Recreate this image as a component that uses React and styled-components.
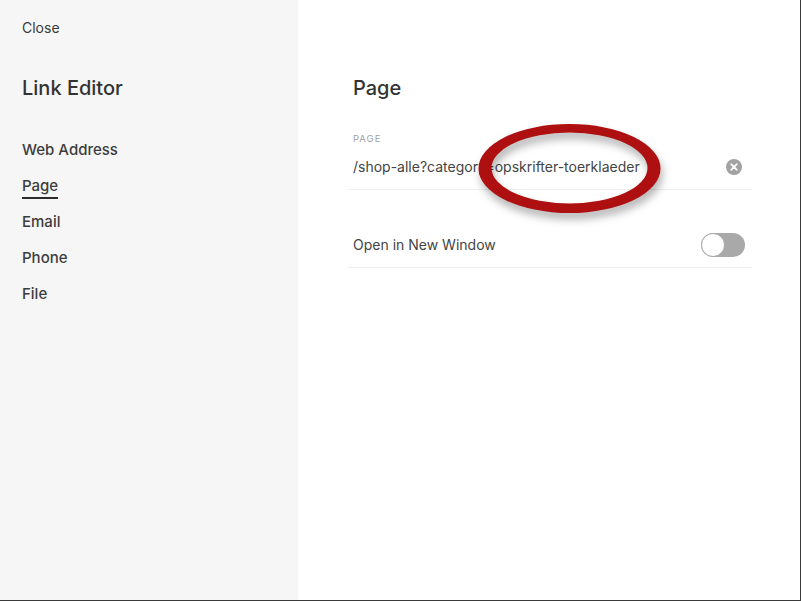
import React from "react";
import styled, { createGlobalStyle } from "styled-components";

const GlobalStyle = createGlobalStyle`
  html, body {
    margin: 0;
    padding: 0;
    background: #fff;
  }
  body {
    font-family: "Inter", "Liberation Sans", sans-serif;
    color: #2f2f2f;
  }
`;

const navItems = ["Web Address", "Page", "Email", "Phone", "File"];

// hand drawn ring, thicker at the sides than at top and bottom
const ringPath =
  "M8.5 49.5a91 44.5 0 1 0 182 0a91 44.5 0 1 0-182 0z" +
  "M21.5 49a78 35.5 0 1 0 156 0a78 35.5 0 1 0-156 0z";

export default function App() {
  return (
    <Frame>
      <GlobalStyle />
      <Sidebar>
        <CloseLink>Close</CloseLink>
        <SideTitle>Link Editor</SideTitle>
        <Nav>
          {navItems.map(item => (
            <NavItem key={item} $active={item === "Page"}>
              {item}
            </NavItem>
          ))}
        </Nav>
      </Sidebar>
      <Main>
        <MainTitle>Page</MainTitle>
        <Field>
          <FieldLabel>PAGE</FieldLabel>
          <FieldRow>
            <FieldValue>/shop-alle?category=opskrifter-toerklaeder</FieldValue>
            <ClearIcon viewBox="0 0 16 16">
              <circle cx="8" cy="8" r="8" fill="#a2a2a2" />
              <path
                d="M5.2 5.2l5.6 5.6M10.8 5.2l-5.6 5.6"
                stroke="#fff"
                strokeWidth="1.7"
                strokeLinecap="round"
              />
            </ClearIcon>
          </FieldRow>
        </Field>
        <ToggleRow>
          <ToggleLabel>Open in New Window</ToggleLabel>
          <Toggle>
            <ToggleKnob />
          </Toggle>
        </ToggleRow>
        <Ring viewBox="0 0 201 109">
          <defs>
            <filter id="ringShadow" x="-10%" y="-20%" width="120%" height="145%">
              <feGaussianBlur stdDeviation="4" />
            </filter>
          </defs>
          <path
            d={ringPath}
            fillRule="evenodd"
            fill="#000"
            fillOpacity="0.3"
            filter="url(#ringShadow)"
            transform="translate(2 6)"
          />
          <path d={ringPath} fillRule="evenodd" fill="#ae0f10" />
        </Ring>
      </Main>
    </Frame>
  );
}

const Frame = styled.div`
  box-sizing: border-box;
  display: flex;
  width: 801px;
  height: 601px;
  overflow: hidden;
  border-right: 1px solid #3a3a3a;
  border-bottom: 1px solid #3a3a3a;
`;
const Sidebar = styled.aside`
  box-sizing: border-box;
  display: flex;
  flex-direction: column;
  align-items: flex-start;
  width: 298px;
  padding: 19px 22px 0;
  background: #f6f6f6;
`;
const CloseLink = styled.div`
  font-size: 14px;
  line-height: 18px;
  color: #3a3a3a;
`;
const SideTitle = styled.h1`
  margin: 39px 0 0;
  font-size: 20px;
  line-height: 24px;
  font-weight: 500;
  color: #333;
`;
const Nav = styled.nav`
  display: flex;
  flex-direction: column;
  align-items: flex-start;
  gap: 14px;
  margin-top: 39px;
`;
const NavItem = styled.div`
  font-size: 15px;
  line-height: 22px;
  font-weight: 500;
  color: #3d3d3d;
  box-shadow: ${props => (props.$active ? "0 2px 0 #2c2c2c" : "none")};
`;
const Main = styled.main`
  position: relative;
  flex: 1;
  box-sizing: border-box;
  padding: 76px 48px 0 50px;
`;
const MainTitle = styled.h2`
  margin: 0 0 0 5px;
  font-size: 20px;
  line-height: 24px;
  font-weight: 500;
  color: #333;
`;
const Field = styled.div`
  margin-top: 33px;
  border-bottom: 1px solid #efefef;
`;
const FieldLabel = styled.div`
  margin-left: 5px;
  font-size: 9.5px;
  line-height: 12px;
  letter-spacing: 1px;
  color: #a2a2a2;
`;
const FieldRow = styled.div`
  display: flex;
  align-items: center;
  justify-content: space-between;
  height: 44px;
  padding: 0 10px 0 5px;
`;
const FieldValue = styled.span`
  font-size: 14px;
  line-height: 18px;
  color: #444;
`;
const ClearIcon = styled.svg`
  width: 16px;
  height: 16px;
`;
const ToggleRow = styled.div`
  display: flex;
  align-items: center;
  justify-content: space-between;
  height: 44px;
  margin-top: 33px;
  padding: 0 7px 0 5px;
  border-bottom: 1px solid #efefef;
`;
const ToggleLabel = styled.span`
  font-size: 14px;
  line-height: 18px;
  color: #444;
`;
const Toggle = styled.div`
  display: flex;
  align-items: center;
  width: 44px;
  height: 24px;
  border-radius: 12px;
  background: #a9a9a9;
`;
const ToggleKnob = styled.div`
  box-sizing: border-box;
  width: 24px;
  height: 24px;
  border-radius: 50%;
  background: #fff;
  border: 1px solid #a9a9a9;
`;
const Ring = styled.svg`
  position: absolute;
  left: 172px;
  top: 119px;
  width: 201px;
  height: 109px;
  overflow: visible;
`;
